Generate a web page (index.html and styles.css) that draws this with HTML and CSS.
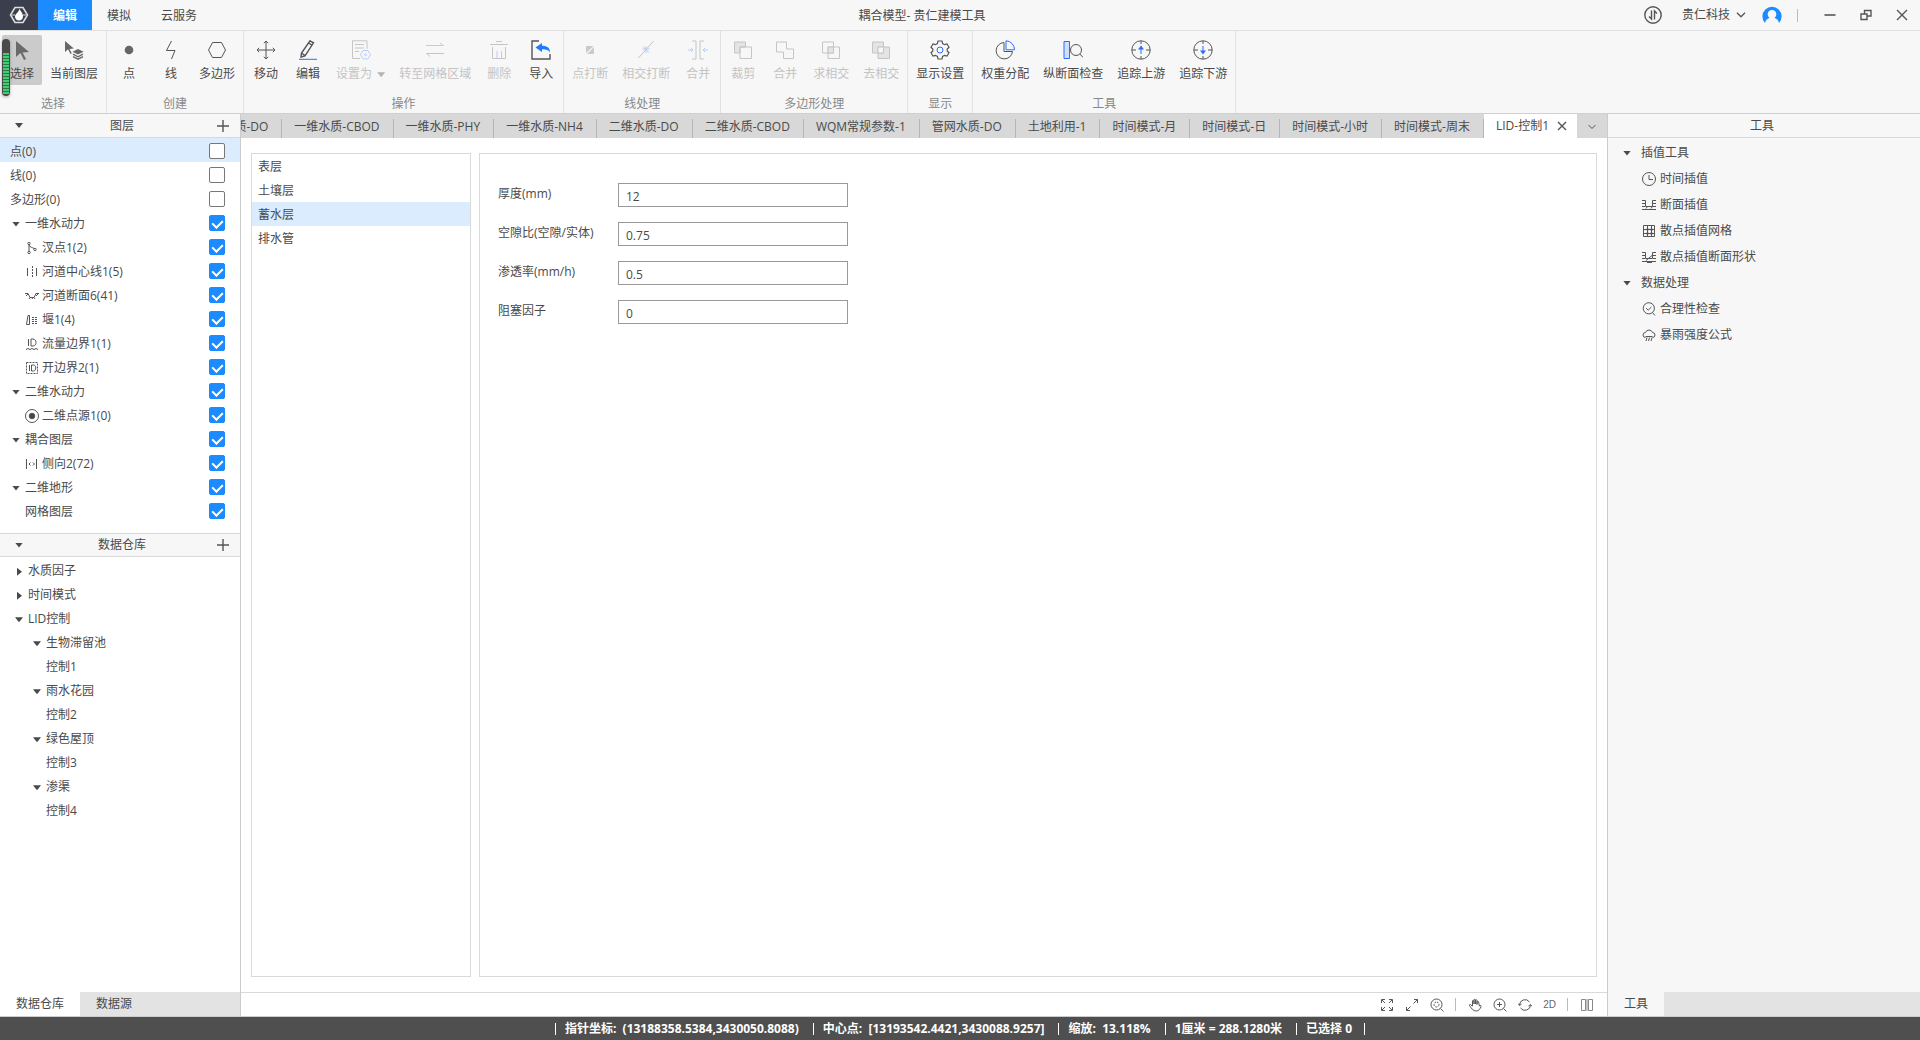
FILE: index.html
```
<!DOCTYPE html>
<html lang="zh-CN">
<head>
  <meta charset="UTF-8">
  <meta name="viewport" content="width=device-width, initial-scale=1.0">
  <title>耦合模型- 贵仁建模工具</title>
  <link rel="stylesheet" href="styles.css">
</head>
<body>
  <header class="titlebar">
    <div class="titlebar-left">
      <div class="logo">
        <svg width="20" height="18" viewBox="0 0 20 18"><path d="M6 1.500h8l4.500 7.500-4.500 7.500H6L1.500 9z" fill="none" stroke="#ddd" stroke-width="1.600"/><path d="M10.500 2.500C11 5 14 6.500 14 10.500c0 2.500-1.800 4-4 4s-4-1.500-4-4C6 8 10 6 10.500 2.500z" fill="#fff"/><path d="M3 9h3M14 9h3" stroke="#ddd"/></svg>
      </div>
      <nav class="menu">
        <button class="menu-item active">编辑</button>
        <button class="menu-item">模拟</button>
        <button class="menu-item">云服务</button>
      </nav>
    </div>
    <div class="window-title">耦合模型- 贵仁建模工具</div>
    <div class="titlebar-right">
      <button class="icon-btn" aria-label="传输"><svg width="18" height="18" viewBox="0 0 18 18" class="line"><circle cx="9" cy="9" r="8.200" stroke-width="1.400"/><path d="M7.500 4.500v8.500L5 10.500M10.500 13.500V5l2.500 2.500" stroke-width="1.400"/></svg></button>
      <button class="account">贵仁科技 <svg width="10" height="6" viewBox="0 0 10 6" class="line"><path d="M1 .8l4 4 4-4" stroke-width="1.300"/></svg></button>
      <button class="icon-btn" aria-label="用户"><svg width="20" height="18" viewBox="0 0 20 18"><path d="M3 17a9.600 9.600 0 1 1 14 0c-.5-2.600-2-4.300-4.500-5.300a4.300 4.300 0 1 0-5 0C5 12.700 3.500 14.400 3 17z" fill="#1a8cff"/></svg></button>
      <span class="divider"></span>
      <button class="icon-btn" aria-label="最小化"><svg width="12" height="12" viewBox="0 0 12 12" class="line"><path d="M.5 6h11" stroke-width="1.600"/></svg></button>
      <button class="icon-btn" aria-label="还原"><svg width="12" height="12" viewBox="0 0 12 12" class="line"><path d="M1 5h6v5.500H1zM4.500 5V1.500H11V7H7" stroke-width="1.400"/></svg></button>
      <button class="icon-btn" aria-label="关闭"><svg width="12" height="12" viewBox="0 0 12 12" class="line"><path d="M1 1l10 10M11 1L1 11" stroke-width="1.400"/></svg></button>
    </div>
  </header>

  <div class="ribbon">
    <section class="group">
      <div class="group-items">
        <button class="tool selected"><svg viewBox="0 0 20 20"><path d="M4 1v16l4.500-4 3.500 7 2-1-3.500-6.500 6.500-.5z" fill="#6a6a6a"/></svg><span>选择</span></button>
        <button class="tool"><svg viewBox="0 0 20 20"><path d="M1 1v11l3-2.700L6.500 14l1.300-.7L5.500 9l4.300-.5z" fill="#666"/><path d="M14 9l5.500 2.800L14 14.600l-5.500-2.800z" fill="#666"/><path d="M9 14.200l5 2.600 5-2.600M9 16.600l5 2.600 5-2.600" fill="none" stroke="#666" stroke-width="1.300"/></svg><span>当前图层</span></button>
      </div>
      <h2>选择</h2>
    </section>
    <section class="group">
      <div class="group-items">
        <button class="tool"><svg viewBox="0 0 20 20"><circle cx="10" cy="10" r="4.300" fill="#666"/></svg><span>点</span></button>
        <button class="tool"><svg viewBox="0 0 20 20" class="line"><path d="M10.500 1L5.500 10.500h8.500L10.500 19"/></svg><span>线</span></button>
        <button class="tool"><svg viewBox="0 0 20 20" class="line"><path d="M5.500 2.500h9L18.500 10l-4 7.500h-9L1.500 10z"/></svg><span>多边形</span></button>
      </div>
      <h2>创建</h2>
    </section>
    <section class="group">
      <div class="group-items">
        <button class="tool"><svg viewBox="0 0 20 20" class="line"><path d="M10 1v18M1 10h18M7.800 3.200L10 1l2.200 2.200M7.800 16.800L10 19l2.200-2.200M3.200 7.800L1 10l2.200 2.200M16.800 7.800L19 10l-2.200 2.200"/></svg><span>移动</span></button>
        <button class="tool"><svg viewBox="0 0 20 20" class="line"><path d="M12 .8l3.500 2L7 16l-4 1 .5-4zM10.500 3l3.500 2.200M3.500 13L7 15.500" stroke-width="1.400"/><path d="M1 19.300h18" class="blue"/></svg><span>编辑</span></button>
        <button class="tool" disabled><svg viewBox="0 0 20 20" class="line"><path d="M9 18.500H1.500V.8h14.500v8M4 4.500h9M4 8h9M4 11.500h4"/><g class="blue"><path d="M12 10.500h5l2.500 4.200-2.500 4.200h-5l-2.500-4.200z"/><circle cx="14.500" cy="14.700" r="1"/></g></svg><span>设置为 <i class="caret down"></i></span></button>
        <button class="tool" disabled><svg viewBox="0 0 20 20" class="line"><path d="M1 5.500h17.500L15 3" class="blue"/><path d="M19 13.500H1.500L5 16.500"/></svg><span>转至网格区域</span></button>
        <button class="tool" disabled><svg viewBox="0 0 20 20" class="line"><path d="M1 4.500h18M7 1.500h6M3.500 7v11.500h13V7"/><path d="M8 11v7M12.500 11v7" class="blue"/></svg><span>删除</span></button>
        <button class="tool"><svg viewBox="0 0 20 20" class="line"><path d="M8 1H1v18h18v-5" stroke-width="1.400"/><path d="M4.500 7.500L11 3v2.700c5 0 8 2 8 6.800-1.500-2.600-4-3.500-8-3.300V12z" fill="#1a7cff" stroke="none"/></svg><span>导入</span></button>
      </div>
      <h2>操作</h2>
    </section>
    <section class="group">
      <div class="group-items">
        <button class="tool" disabled><svg viewBox="0 0 20 20"><path d="M6 6h7.500L6 13zM14 7v7H7z" fill="#666"/></svg><span>点打断</span></button>
        <button class="tool" disabled><svg viewBox="0 0 20 20" class="line"><path d="M2.500 18L17.500 1"/><path d="M6.500 9h7M10 6v7M7 6.500l6 6" class="blue"/></svg><span>相交打断</span></button>
        <button class="tool" disabled><svg viewBox="0 0 20 20" class="line"><path d="M4 1h4v18H4M16 1h-4v18h4"/><path d="M0 10h5M3 8l2 2-2 2M20 10h-5M17 8l-2 2 2 2" class="blue"/></svg><span>合并</span></button>
      </div>
      <h2>线处理</h2>
    </section>
    <section class="group">
      <div class="group-items">
        <button class="tool" disabled><svg viewBox="0 0 20 20" class="line"><path d="M1.500 2h11v5H7v6H1.500z" fill="#bbb"/><path d="M7 7h11.500v11.500H7z"/></svg><span>裁剪</span></button>
        <button class="tool" disabled><svg viewBox="0 0 20 20" class="line"><path d="M1.500 2h10v7h7v9.500H8.500V12h-7z"/></svg><span>合并</span></button>
        <button class="tool" disabled><svg viewBox="0 0 20 20" class="line"><path d="M1.500 2h11v11h-11zM7 7h11.500v11.500H7z"/><path d="M7 7h5.500v6H7z" fill="#bbb"/></svg><span>求相交</span></button>
        <button class="tool" disabled><svg viewBox="0 0 20 20" class="line"><path d="M1.500 2h11v11h-11zM7 7h11.500v11.500H7z" fill="#bbb"/><path d="M7 7h5.500v6H7z" fill="#f7f7f7"/></svg><span>去相交</span></button>
      </div>
      <h2>多边形处理</h2>
    </section>
    <section class="group">
      <div class="group-items">
        <button class="tool"><svg viewBox="0 0 20 20" class="line"><path d="M8 1h4l.6 2.600 1.900 1.100L17 4l2 3.300-1.800 1.700v2L19 12.700 17 16l-2.500-.7-1.900 1.100L12 19H8l-.6-2.600-1.900-1.100L3 16l-2-3.300L2.800 11V9L1 7.300 3 4l2.500.7 1.900-1.100z" stroke-width="1.200"/><circle cx="10" cy="10" r="3" class="blue"/></svg><span>显示设置</span></button>
      </div>
      <h2>显示</h2>
    </section>
    <section class="group">
      <div class="group-items">
        <button class="tool"><svg viewBox="0 0 20 20" class="line"><path d="M9 2.500a8.200 8.200 0 1 0 8.500 9H9z"/><path d="M11 .8v9h8.500a8.800 8.800 0 0 0-8.500-9z" class="blue"/></svg><span>权重分配</span></button>
        <button class="tool"><svg viewBox="0 0 20 20" class="line"><path d="M1 1.500h5.500v17H1z" class="blue" fill="#cfe0ff"/><circle cx="13" cy="10" r="5.500"/><path d="M17 14l3 3.500"/></svg><span>纵断面检查</span></button>
        <button class="tool"><svg viewBox="0 0 20 20" class="line"><circle cx="10" cy="10" r="9.200"/><path d="M10 1v3M10 16v3M1 10h4M15 10h4"/><path d="M10 14V8" class="blue"/><path d="M10 5.500L7 9.500h6z" class="blue-fill"/></svg><span>追踪上游</span></button>
        <button class="tool"><svg viewBox="0 0 20 20" class="line"><circle cx="10" cy="10" r="9.200"/><path d="M10 1v3M10 16v3M1 10h4M15 10h4"/><path d="M10 6v6" class="blue"/><path d="M10 14.500L7 10.500h6z" class="blue-fill"/></svg><span>追踪下游</span></button>
      </div>
      <h2>工具</h2>
    </section>
    <div class="meter"><span></span></div>
  </div>

  <div class="workspace">
    <aside class="side-left">
      <div class="panel-head">
        <button class="icon-btn" aria-label="折叠"><i class="caret down"></i></button>
        <h3>图层</h3>
        <button class="icon-btn" aria-label="添加图层"><svg width="12" height="12" viewBox="0 0 12 12" class="line"><path d="M6 0v12M0 6h12" stroke-width="1.400"/></svg></button>
      </div>
      <ul class="tree layers">
        <li class="selected"><label>点(0)<input type="checkbox"></label></li>
        <li><label>线(0)<input type="checkbox"></label></li>
        <li><label>多边形(0)<input type="checkbox"></label></li>
        <li><label><i class="caret down"></i>一维水动力<input type="checkbox" checked></label></li>
        <li class="child"><label><svg viewBox="0 0 14 14" class="line"><circle cx="4" cy="2.500" r="1.200"/><circle cx="4" cy="11.500" r="1.200"/><circle cx="10" cy="8.500" r="1.200"/><path d="M4 3.500v7M4 4c1 2.500 3 2 5 3.500"/></svg>汊点1(2)<input type="checkbox" checked></label></li>
        <li class="child"><label><svg viewBox="0 0 14 14" class="line"><path d="M2.500 3v8M11.500 3v8"/><path d="M7.500 1v12" stroke-dasharray="2 1"/></svg>河道中心线1(5)<input type="checkbox" checked></label></li>
        <li class="child"><label><svg viewBox="0 0 14 14" class="line"><path d="M0 4.500h3l2 4h4l2-4h3M1 7l2-2M11 7l2-2M4 10l1-1.500M7 10l1-1.500M10 10l-1-1.500"/></svg>河道断面6(41)<input type="checkbox" checked></label></li>
        <li class="child"><label><svg viewBox="0 0 14 14" class="line"><path d="M1.500 11.500L3 2.500h1.500v9z"/><path d="M7 4.500h6M7 6.500h6M7 8.500h6M7 10.500h6" stroke-dasharray="2 1"/></svg>堰1(4)<input type="checkbox" checked></label></li>
        <li class="child"><label><svg viewBox="0 0 14 14" class="line"><path d="M3.500 2v7M6 2v7h2c4 0 4-7 0-7zM1 12.500l2-1 2 1 2-1 2 1 2-1 2 1"/></svg>流量边界1(1)<input type="checkbox" checked></label></li>
        <li class="child"><label><svg viewBox="0 0 14 14" class="line"><path d="M1.500 1.500h11v11h-11z" stroke-dasharray="2 1"/><path d="M4.500 4v6M6.500 4v6h2c3 0 3-6 0-6z"/></svg>开边界2(1)<input type="checkbox" checked></label></li>
        <li><label><i class="caret down"></i>二维水动力<input type="checkbox" checked></label></li>
        <li class="child"><label><svg viewBox="0 0 14 14" class="line"><circle cx="7" cy="7" r="6.500"/><circle cx="7" cy="7" r="2.800" fill="#444"/></svg>二维点源1(0)<input type="checkbox" checked></label></li>
        <li><label><i class="caret down"></i>耦合图层<input type="checkbox" checked></label></li>
        <li class="child"><label><svg viewBox="0 0 14 14" class="line"><path d="M1.500 2v10M11.500 2v10M5.500 5.500L4 7l1.500 1.500M8 5.500L9.500 7 8 8.500"/></svg>侧向2(72)<input type="checkbox" checked></label></li>
        <li><label><i class="caret down"></i>二维地形<input type="checkbox" checked></label></li>
        <li class="child"><label>网格图层<input type="checkbox" checked></label></li>
      </ul>

      <div class="panel-head">
        <button class="icon-btn" aria-label="折叠"><i class="caret down"></i></button>
        <h3>数据仓库</h3>
        <button class="icon-btn" aria-label="添加数据"><svg width="12" height="12" viewBox="0 0 12 12" class="line"><path d="M6 0v12M0 6h12" stroke-width="1.400"/></svg></button>
      </div>
      <ul class="tree store">
        <li><i class="caret right"></i>水质因子</li>
        <li><i class="caret right"></i>时间模式</li>
        <li><i class="caret down"></i>LID控制
          <ul>
            <li><i class="caret down"></i>生物滞留池</li>
            <li class="leaf">控制1</li>
            <li><i class="caret down"></i>雨水花园</li>
            <li class="leaf">控制2</li>
            <li><i class="caret down"></i>绿色屋顶</li>
            <li class="leaf">控制3</li>
            <li><i class="caret down"></i>渗渠</li>
            <li class="leaf">控制4</li>
          </ul>
        </li>
      </ul>
      <div class="bottom-tabs">
        <button class="active">数据仓库</button>
        <button>数据源</button>
      </div>
    </aside>

    <main class="center">
      <div class="doc-bar">
        <div class="doc-tabs">
          <button>一维水质-DO</button>
          <button>一维水质-CBOD</button>
          <button>一维水质-PHY</button>
          <button>一维水质-NH4</button>
          <button>二维水质-DO</button>
          <button>二维水质-CBOD</button>
          <button>WQM常规参数-1</button>
          <button>管网水质-DO</button>
          <button>土地利用-1</button>
          <button>时间模式-月</button>
          <button>时间模式-日</button>
          <button>时间模式-小时</button>
          <button>时间模式-周末</button>
          <button class="active">LID-控制1 <svg width="10" height="10" viewBox="0 0 10 10" class="line"><path d="M1 1l8 8M9 1L1 9" stroke-width="1.400"/></svg></button>
        </div>
        <button class="more" aria-label="更多标签"><svg width="8" height="6" viewBox="0 0 8 6" class="line"><path d="M.5 1L4 4.500 7.500 1"/></svg></button>
      </div>
      <div class="content">
        <ul class="layer-list">
          <li>表层</li>
          <li>土壤层</li>
          <li class="selected">蓄水层</li>
          <li>排水管</li>
        </ul>
        <form class="params">
          <div class="field"><label for="thickness">厚度(mm)</label><input type="text" id="thickness" value="12"></div>
          <div class="field"><label for="void-ratio">空隙比(空隙/实体)</label><input type="text" id="void-ratio" value="0.75"></div>
          <div class="field"><label for="seepage">渗透率(mm/h)</label><input type="text" id="seepage" value="0.5"></div>
          <div class="field"><label for="clogging">阻塞因子</label><input type="text" id="clogging" value="0"></div>
        </form>
      </div>
      <div class="view-bar">
        <button class="icon-btn" aria-label="全屏"><svg width="14" height="14" viewBox="0 0 14 14" class="line"><path d="M1.500 5V1.500H5M2 2l3 3M9 1.500h3.500V5M12 2L9 5M1.500 9v3.500H5M2 12l3-3M9 12.500h3.500V9M12 12L9 9"/></svg></button>
        <button class="icon-btn" aria-label="展开"><svg width="14" height="14" viewBox="0 0 14 14" class="line"><path d="M9 1.500h3.500V5M12.500 1.500l-4 4M1.500 9v3.500H5M1.500 12.500l4-4"/></svg></button>
        <button class="icon-btn" aria-label="缩放至图层"><svg width="14" height="14" viewBox="0 0 14 14" class="line"><circle cx="6.500" cy="6.500" r="5.500"/><circle cx="6.500" cy="6.500" r="2.500" stroke-dasharray="2 1"/><path d="M10.500 10.500l3 3"/></svg></button>
        <span class="divider"></span>
        <button class="icon-btn" aria-label="平移"><svg width="14" height="14" viewBox="0 0 14 14" class="line"><path d="M4.500 8V3c0-1 1.500-1 1.500 0v3-4c0-1 1.500-1 1.500 0v4-3.500c0-1 1.500-1 1.500 0V6.500 4c0-1 1.500-1 1.500 0L11.500 8c1-1 2-.5 1.500.5C12 11 11 13 8.500 13 5 13 3.500 10.500 1.500 7.500c-.5-1 1-1.500 1.500-.5z"/></svg></button>
        <button class="icon-btn" aria-label="放大"><svg width="14" height="14" viewBox="0 0 14 14" class="line"><circle cx="6.500" cy="6.500" r="5.500"/><path d="M10.500 10.500l3 3M4 6.500h5M6.500 4v5"/></svg></button>
        <button class="icon-btn" aria-label="刷新"><svg width="14" height="14" viewBox="0 0 14 14" class="line"><path d="M1.500 7a5.500 5.500 0 0 1 10-3M12.500 7a5.500 5.500 0 0 1-10 3M0 5.500L1.500 7.500 3.500 6M10.500 8l2-1.500L14 8.500"/></svg></button>
        <button class="icon-btn mode">2D</button>
        <span class="divider"></span>
        <button class="icon-btn" aria-label="分屏"><svg width="14" height="14" viewBox="0 0 14 14" class="line"><path d="M5.500 1.500h-4v11h4zM8.500 1.500h4v11h-4zM7 1v12" stroke="#888"/></svg></button>
      </div>
    </main>

    <aside class="side-right">
      <div class="panel-head"><h3>工具</h3></div>
      <ul class="tools-tree">
        <li><i class="caret down"></i>插值工具</li>
        <li class="child"><svg viewBox="0 0 14 14" class="line"><circle cx="7" cy="7" r="6.500"/><path d="M7 3v4.500h4"/></svg>时间插值</li>
        <li class="child"><svg viewBox="0 0 14 14" class="line"><path d="M0 2.500h3.500V8.500h7v-6H14M0 5.500h3M0 8.500h3M0 11.500h14M11 5.500h3M11 8.500h3M4 10.500l1.500-2M9 10.500l1.500-2"/></svg>断面插值</li>
        <li class="child"><svg viewBox="0 0 14 14" class="line"><path d="M1.500 1.500h11v11h-11zM5.500 1.500v11M9.500 1.500v11M1.500 5.500h11M1.500 9.500h11"/><path d="M4.500 5.500h2M8.500 5.500h2M4.500 9.500h2M8.500 9.500h2" stroke-width="2"/></svg>散点插值网格</li>
        <li class="child"><svg viewBox="0 0 14 14" class="line"><path d="M0 2.500h3.500V8.500h7v-6H14M0 5.500h3M0 8.500h3M0 11.500h14M11 5.500h3M11 8.500h3M4 10.500l6-5M5 12.500h5"/></svg>散点插值断面形状</li>
        <li><i class="caret down"></i>数据处理</li>
        <li class="child"><svg viewBox="0 0 14 14" class="line"><circle cx="6.800" cy="6.300" r="5.600"/><path d="M4.200 6.200l2 2 3.200-3.200M10.500 10.500l2.500 3"/></svg>合理性检查</li>
        <li class="child"><svg viewBox="0 0 14 14" class="line"><path d="M3.500 9.500a2.500 2.500 0 0 1 0-5 3.700 3.700 0 0 1 7 0 2.500 2.500 0 0 1 0 5M3.500 8.500h7"/><path d="M5 9.500l-1 3.500M7.500 9.500l-1 3.500M10 9.500L9 13"/></svg>暴雨强度公式</li>
      </ul>
      <div class="bottom-tabs">
        <button class="active">工具</button>
      </div>
    </aside>
  </div>

  <footer class="statusbar">
    <span>指针坐标:&nbsp; (13188358.5384,3430050.8088)</span>
    <span>中心点:&nbsp; [13193542.4421,3430088.9257]</span>
    <span>缩放:&nbsp; 13.118%</span>
    <span>1厘米 = 288.1280米</span>
    <span>已选择 0</span>
  </footer>
</body>
</html>
```
FILE: styles.css
```
:root {
  --primary: #1a8cff;
  --text: #4a4a4a;
  --bar: #f7f7f7;
  --line: #d9d9d9;
  --tab: #d8d8d8;
  --selected: #dbecfe;
}

* {
  margin: 0;
  padding: 0;
  box-sizing: border-box;
}

body {
  display: flex;
  flex-direction: column;
  height: 100vh;
  font-family: "Open Sans", "Noto Sans CJK SC", sans-serif;
  font-size: 12px;
  line-height: 16px;
  color: var(--text);
  background: #fff;
  overflow: hidden;
}

button, input {
  font: inherit;
  color: inherit;
}

button {
  border: none;
  background: none;
  white-space: nowrap;
}

h2, h3 {
  font-size: 12px;
  font-weight: 400;
}

ul {
  list-style: none;
}

svg {
  flex-shrink: 0;
}

.line {
  fill: none;
  stroke: #555;
  stroke-width: 1;
}

.blue {
  stroke: #2b6cff;
}

.blue-fill {
  fill: #2b6cff;
  stroke: none;
}

.caret {
  display: inline-block;
  flex-shrink: 0;
  width: 8px;
  height: 5px;
  background: var(--text);
  clip-path: polygon(0 0, 100% 0, 50% 100%);
}

.caret.right {
  width: 5px;
  height: 8px;
  margin: 0 2px;
  clip-path: polygon(0 0, 100% 50%, 0 100%);
}

.icon-btn {
  display: flex;
  align-items: center;
  justify-content: center;
}

.divider {
  width: 1px;
  height: 13px;
  background: #bbb;
}

/* title bar */
.titlebar {
  display: grid;
  grid-template-columns: 1fr auto 1fr;
  height: 31px;
  background: var(--bar);
  border-bottom: 1px solid #e1e1e1;
}

.titlebar-left, .menu {
  display: flex;
}

.logo {
  display: flex;
  align-items: center;
  justify-content: center;
  width: 38px;
  background: #3b3f4d;
}

.menu-item {
  padding: 2px 15px 0;
}

.menu-item.active {
  background: var(--primary);
  color: #fff;
  font-weight: 700;
}

.window-title {
  align-self: center;
  padding: 2px 76px 0 0;
}

.titlebar-right {
  display: flex;
  align-items: center;
  justify-content: flex-end;
  gap: 24px;
  padding-right: 12px;
}

.titlebar-right .account {
  display: flex;
  align-items: center;
  gap: 6px;
  margin: 0 -8px 0 -4px;
}

.titlebar-right .divider {
  margin: 0 2px 0 -9px;
}

/* ribbon */
.ribbon {
  position: relative;
  display: flex;
  height: 83px;
  background: var(--bar);
  border-bottom: 1px solid #d0d0d0;
}

.group {
  display: flex;
  flex-direction: column;
  justify-content: space-between;
  padding: 4px 2px 1px;
  border-right: 1px solid #e1e1e1;
}

.group-items {
  display: flex;
  gap: 2px;
}

.group h2 {
  text-align: center;
  color: #888;
}

.tool {
  display: flex;
  flex-direction: column;
  align-items: center;
  gap: 6px;
  min-width: 40px;
  height: 50px;
  padding: 5px 6px 0;
}

.tool svg {
  width: 20px;
  height: 20px;
}

.tool .caret {
  margin-left: 2px;
  vertical-align: middle;
}

.tool.selected {
  background: #cbcbcb;
  border-radius: 2px;
}

.tool:disabled {
  color: #c4c4c4;
}

.tool:disabled svg {
  opacity: 0.3;
}

.tool:disabled .caret {
  background: #b5b5b5;
}

.meter {
  position: absolute;
  left: 2px;
  top: 8px;
  width: 8px;
  height: 57px;
  padding: 14px 1px 2px;
  border-radius: 4px;
  background: #4a4a4a;
  box-shadow: 0 1px 3px rgba(0, 0, 0, 0.3);
}

.meter span {
  display: block;
  height: 100%;
  background: repeating-linear-gradient(#3fcf72 0 2px, #35744a 2px 3px);
}

/* workspace */
.workspace {
  display: grid;
  grid-template-columns: 241px 1fr 313px;
  flex: 1;
  min-height: 0;
}

.side-left, .side-right, .center {
  display: flex;
  flex-direction: column;
  min-width: 0;
  min-height: 0;
}

.side-left {
  border-right: 1px solid #ccc;
}

.side-right {
  background: var(--bar);
  border-left: 1px solid #ccc;
}

.panel-head {
  display: flex;
  align-items: center;
  height: 24px;
  padding: 0 11px 0 15px;
  background: var(--bar);
  border-bottom: 1px solid var(--line);
}

.panel-head h3 {
  flex: 1;
  text-align: center;
}

.side-left .panel-head h3 {
  padding-left: 4px;
}

.layers + .panel-head {
  border-top: 1px solid var(--line);
}

.layers {
  padding-bottom: 11px;
}

.layers label {
  display: flex;
  align-items: center;
  gap: 5px;
  height: 24px;
  padding: 4px 15px 0 10px;
}

.layers .caret {
  margin-left: 2px;
}

.layers .child label {
  gap: 3px;
  padding-left: 25px;
}

.tree svg, .tools-tree svg {
  width: 14px;
  height: 14px;
}

.selected {
  background: var(--selected);
}

.layers input {
  appearance: none;
  display: flex;
  justify-content: center;
  width: 16px;
  height: 16px;
  margin: 0 0 2px auto;
  border: 1px solid #777;
  border-radius: 2px;
  background: #fff;
}

.layers input:checked {
  border-color: var(--primary);
  background: var(--primary);
}

.layers input:checked::before {
  content: "";
  width: 5px;
  height: 8px;
  margin-top: 2px;
  border: solid #fff;
  border-width: 0 2px 2px 0;
  transform: rotate(45deg);
}

.store {
  flex: 1;
  padding: 2px 0 0 15px;
  line-height: 24px;
}

.store .caret {
  margin-right: 5px;
  vertical-align: middle;
}

.store .caret.right {
  margin-right: 6px;
}

.store ul {
  padding-left: 18px;
}

.store .leaf {
  padding-left: 13px;
}

.bottom-tabs {
  display: flex;
  height: 25px;
  background: #e3e3e3;
  border-bottom: 1px solid #ccc;
}

.bottom-tabs button {
  padding: 0 16px;
}

.bottom-tabs .active {
  background: #fff;
}

/* documents */
.doc-bar {
  display: flex;
  height: 24px;
  background: var(--tab);
}

.doc-tabs {
  display: flex;
  flex: 1;
  justify-content: flex-end;
  align-items: flex-end;
  min-width: 0;
  overflow: hidden;
}

.doc-tabs button {
  flex-shrink: 0;
  height: 19px;
  padding: 0 13px 4px 12px;
  border-right: 1px solid #b5b5b5;
}

.doc-tabs .active {
  display: flex;
  align-items: center;
  gap: 8px;
  height: 24px;
  padding: 0 10px 0 12px;
  border: none;
  background: #fff;
}

.more {
  width: 30px;
}

.content {
  display: flex;
  flex: 1;
  gap: 8px;
  padding: 15px 10px;
}

.layer-list {
  width: 220px;
  border: 1px solid var(--line);
}

.layer-list li {
  height: 24px;
  padding: 1px 0 0 6px;
  line-height: 24px;
}

.params {
  display: flex;
  flex: 1;
  flex-direction: column;
  gap: 15px;
  padding: 29px 18px;
  border: 1px solid var(--line);
}

.field {
  display: flex;
}

.field label {
  width: 120px;
  line-height: 22px;
}

.field input {
  width: 230px;
  height: 24px;
  padding: 2px 7px 0;
  border: 1px solid #999;
  background: #fff;
}

.view-bar {
  display: flex;
  align-items: center;
  justify-content: flex-end;
  gap: 11px;
  height: 25px;
  padding-right: 13px;
  border-top: 1px solid var(--line);
  border-bottom: 1px solid #ccc;
}

.view-bar .divider {
  margin-right: 1px;
}

.mode {
  font-family: "Liberation Sans", sans-serif;
  font-size: 10px;
  color: #666;
}

/* tool panel */
.side-right .panel-head {
  padding: 0 15px 0 11px;
}

.tools-tree {
  flex: 1;
  padding: 2px 0 0 15px;
}

.tools-tree li {
  display: flex;
  align-items: center;
  gap: 10px;
  height: 26px;
}

.tools-tree .child {
  gap: 4px;
  padding-left: 19px;
}

.side-right .bottom-tabs .active {
  background: var(--bar);
}

/* status bar */
.statusbar {
  display: flex;
  align-items: center;
  justify-content: center;
  height: 23px;
  background: #4f4f4f;
  color: #fff;
  font-weight: 700;
}

.statusbar span {
  display: flex;
  align-items: center;
  padding-right: 14px;
}

.statusbar span::before {
  content: "";
  width: 1px;
  height: 12px;
  margin-right: 9px;
  background: #fff;
}

.statusbar span:last-child {
  padding-right: 0;
}

.statusbar span:last-child::after {
  content: "";
  width: 1px;
  height: 12px;
  margin-left: 12px;
  background: #fff;
}
```
